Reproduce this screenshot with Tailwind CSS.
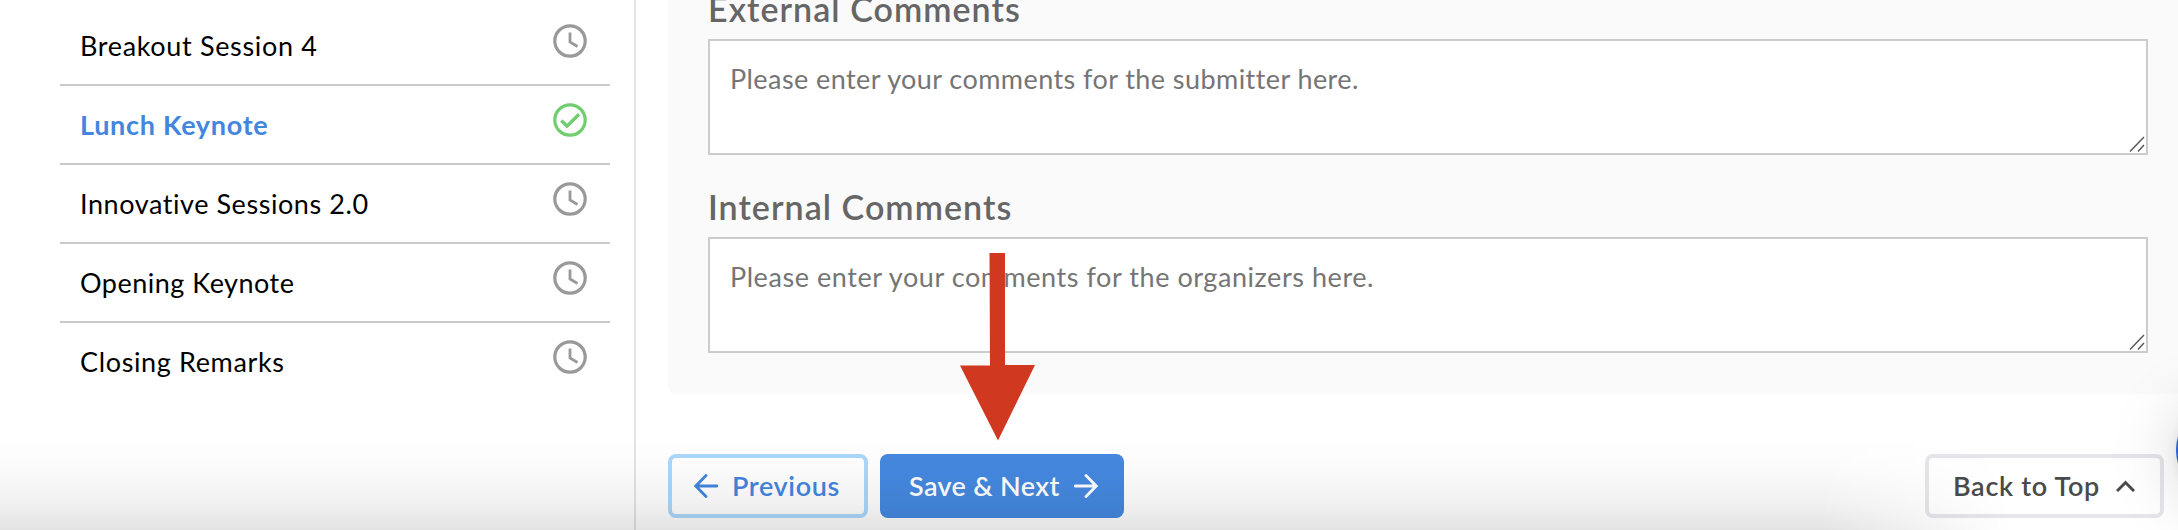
<!DOCTYPE html>
<html lang="en">
<head>
  <meta charset="UTF-8" />
  <meta name="viewport" content="width=device-width, initial-scale=1.0" />
  <title>Session Reviews</title>
  <script src="https://cdn.jsdelivr.net/npm/@tailwindcss/browser@4"></script>
</head>
<body class="bg-white overflow-hidden font-['Lato','Liberation_Sans',sans-serif]">
  <svg class="hidden">
    <symbol id="clock" viewBox="0 0 34 34" fill="none" stroke="currentColor" stroke-width="3.2">
      <circle cx="17" cy="17" r="15.2" />
      <path d="M17 8.5V18l7.5 4.5" stroke-width="2.8" />
    </symbol>
    <symbol id="check" viewBox="0 0 34 34" fill="none" stroke="currentColor" stroke-width="3.2">
      <circle cx="17" cy="17" r="15.2" />
      <path d="M8.3 17.5l5.7 5.7L26 11.2" stroke-width="3.4" />
    </symbol>
    <symbol id="grip" viewBox="0 0 16 16" fill="none" stroke="#555" stroke-width="1.4">
      <path d="M1 15.5L15 1M9 15.5L15 9" />
    </symbol>
  </svg>

  <div class="relative flex h-[530px] w-[2178px] overflow-hidden">
    <!-- Session list -->
    <aside class="w-[636px] shrink-0 border-r-2 border-[#e3e3e8] pl-[60px] pr-6 pt-[7px]">
      <ul class="text-[27px] leading-[32px] text-black">
        <li class="flex h-[79px] justify-between border-b-2 border-[#c9c9c9] pl-5 pr-[23px] pt-[17px]">
          <span class="pt-[6px] tracking-[0.66px]">Breakout Session 4</span>
          <svg class="size-[34px] text-[#999]"><use href="#clock" /></svg>
        </li>
        <li class="flex h-[79px] justify-between border-b-2 border-[#c9c9c9] pl-5 pr-[23px] pt-[17px]">
          <span class="pt-[6px] font-bold tracking-[0.7px] text-[#4386de]">Lunch Keynote</span>
          <svg class="size-[34px] text-[#71ce70]"><use href="#check" /></svg>
        </li>
        <li class="flex h-[79px] justify-between border-b-2 border-[#c9c9c9] pl-5 pr-[23px] pt-[17px]">
          <span class="pt-[6px] tracking-[0.57px]">Innovative Sessions 2.0</span>
          <svg class="size-[34px] text-[#999]"><use href="#clock" /></svg>
        </li>
        <li class="flex h-[79px] justify-between border-b-2 border-[#c9c9c9] pl-5 pr-[23px] pt-[17px]">
          <span class="pt-[6px] tracking-[0.5px]">Opening Keynote</span>
          <svg class="size-[34px] text-[#999]"><use href="#clock" /></svg>
        </li>
        <li class="flex h-[79px] justify-between pl-5 pr-[23px] pt-[17px]">
          <span class="pt-[6px] tracking-[0.64px]">Closing Remarks</span>
          <svg class="size-[34px] text-[#999]"><use href="#clock" /></svg>
        </li>
      </ul>
    </aside>

    <!-- Review form -->
    <main class="flex-1 pl-8">
      <section class="h-[394px] rounded-bl-lg bg-[#fafafa] pl-10 pr-[30px]">
        <div class="flex h-[39px] items-end pb-[9px]">
          <h2 class="text-[34px] font-semibold leading-[42px] tracking-[1.05px] text-[#666]">External Comments</h2>
        </div>
        <div class="relative">
          <textarea class="block h-[116px] w-full resize-none border-2 border-[#ccc] bg-white px-5 py-[22px] text-[27px] leading-[32px] tracking-[0.43px] placeholder:text-[#757575]" placeholder="Please enter your comments for the submitter here."></textarea>
          <svg class="absolute bottom-[3px] right-[3px] size-4"><use href="#grip" /></svg>
        </div>
        <div class="flex h-[82px] items-end pb-[9px]">
          <h2 class="text-[34px] font-semibold leading-[42px] tracking-[1.05px] text-[#666]">Internal Comments</h2>
        </div>
        <div class="relative">
          <textarea class="block h-[116px] w-full resize-none border-2 border-[#ccc] bg-white px-5 py-[22px] text-[27px] leading-[32px] tracking-[0.56px] placeholder:text-[#757575]" placeholder="Please enter your comments for the organizers here."></textarea>
          <svg class="absolute bottom-[3px] right-[3px] size-4"><use href="#grip" /></svg>
        </div>
      </section>

      <div class="mt-[60px] flex h-16 pr-[14px] text-[27px] font-semibold leading-[32px]">
        <button class="flex w-[200px] items-center rounded-lg border-4 border-[#acd8fc] pl-[22px] text-[#4386de]">
          <svg class="mr-[14px] h-6 w-6" viewBox="0 0 24 24" fill="none" stroke="currentColor" stroke-width="2.8" stroke-linecap="round"><path d="M12 1.5L1.8 12 12 22.5M2 12h21" /></svg>
          <span class="tracking-[0.62px]">Previous</span>
        </button>
        <button class="ml-3 flex w-[244px] items-center rounded-lg bg-[#4589e0] pl-[29px] text-white">
          <span class="w-[165px] text-left tracking-[0.35px]">Save &amp; Next</span>
          <svg class="h-6 w-6" viewBox="0 0 24 24" fill="none" stroke="currentColor" stroke-width="2.8" stroke-linecap="round"><path d="M12 1.5L22.2 12 12 22.5M1 12h21" /></svg>
        </button>
        <button class="ml-auto flex w-[239px] items-center rounded-lg border-4 border-[#e5e5ea] pl-6 text-[#4a4a4a]">
          <span class="w-[163px] text-left tracking-[0.7px]">Back to Top</span>
          <svg class="h-3 w-[19px]" viewBox="0 0 19 12" fill="none" stroke="currentColor" stroke-width="3"><path d="M1 11l8.5-8.5L18 11" /></svg>
        </button>
      </div>
    </main>

    <!-- Bottom fade -->
    <div class="pointer-events-none absolute inset-x-0 bottom-0 h-[90px] bg-[linear-gradient(to_bottom,rgb(0_0_0/0),rgb(0_0_0/0.018)_35%,rgb(0_0_0/0.055)_70%,rgb(0_0_0/0.11))] [mask-image:linear-gradient(to_right,black_1820px,transparent_2010px)]"></div>

    <!-- Chat launcher -->
    <div class="absolute left-[2176px] top-[402px] size-24 rounded-full bg-[#2b5fd3] shadow-[0_2px_12px_rgb(0_0_0/0.08),0_4px_70px_rgb(0_0_0/0.18)]"></div>

    <!-- Pointer to the save button -->
    <svg class="absolute left-[960px] top-[253px] h-[188px] w-[76px]" viewBox="0 0 76 188" fill="#d03920">
      <path d="M29.5 0H45V112H75L38 187.5L0 112.5H30z" />
    </svg>
  </div>
</body>
</html>
